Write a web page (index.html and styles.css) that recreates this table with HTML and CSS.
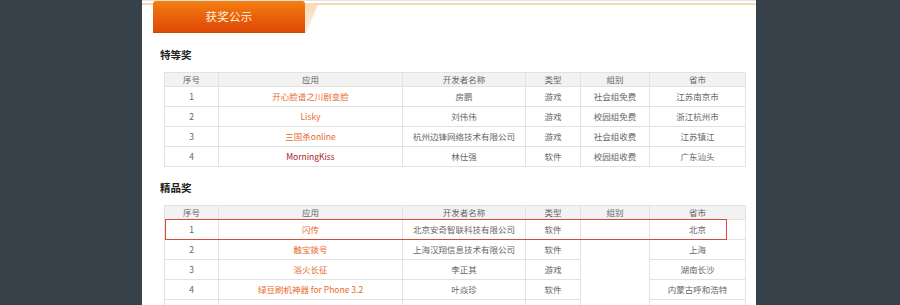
FILE: index.html
```html
<!DOCTYPE html>
<html lang="zh-CN">
<head>
<meta charset="utf-8">
<title>获奖公示</title>
<link rel="stylesheet" href="styles.css">
</head>
<body>
<div class="panel">
  <div class="tabbar">
    <div class="tab">获奖公示</div>
    <div class="wedge"></div>
  </div>

  <h2 class="sec-title">特等奖</h2>
  <div class="table-wrap">
    <table class="award">
      <colgroup>
        <col class="c1"><col class="c2"><col class="c3"><col class="c4"><col class="c5"><col class="c6">
      </colgroup>
      <thead>
        <tr><th>序号</th><th>应用</th><th>开发者名称</th><th>类型</th><th>组别</th><th>省市</th></tr>
      </thead>
      <tbody>
        <tr><td>1</td><td class="app">开心脸谱之川剧变脸</td><td>房鹏</td><td>游戏</td><td>社会组免费</td><td>江苏南京市</td></tr>
        <tr><td>2</td><td class="app">Lisky</td><td>刘伟伟</td><td>游戏</td><td>校园组免费</td><td>浙江杭州市</td></tr>
        <tr><td>3</td><td class="app">三国杀online</td><td>杭州边锋网络技术有限公司</td><td>游戏</td><td>社会组收费</td><td>江苏镇江</td></tr>
        <tr><td>4</td><td class="app dark">MorningKiss</td><td>林仕强</td><td>软件</td><td>校园组收费</td><td>广东汕头</td></tr>
      </tbody>
    </table>
  </div>

  <h2 class="sec-title">精品奖</h2>
  <div class="table-wrap">
    <table class="award">
      <colgroup>
        <col class="c1"><col class="c2"><col class="c3"><col class="c4"><col class="c5"><col class="c6">
      </colgroup>
      <thead>
        <tr><th>序号</th><th>应用</th><th>开发者名称</th><th>类型</th><th>组别</th><th>省市</th></tr>
      </thead>
      <tbody>
        <tr><td>1</td><td class="app">闪传</td><td>北京安奇智联科技有限公司</td><td>软件</td><td></td><td>北京</td></tr>
        <tr><td>2</td><td class="app">触宝拨号</td><td>上海汉翔信息技术有限公司</td><td>软件</td><td rowspan="5"></td><td>上海</td></tr>
        <tr><td>3</td><td class="app">浴火长征</td><td>李正其</td><td>游戏</td><td>湖南长沙</td></tr>
        <tr><td>4</td><td class="app">绿豆刷机神器 for Phone 3.2</td><td>叶焱珍</td><td>软件</td><td>内蒙古呼和浩特</td></tr>
        <tr><td>&nbsp;</td><td></td><td></td><td></td><td></td></tr>
        <tr><td>&nbsp;</td><td></td><td></td><td></td><td></td></tr>
      </tbody>
    </table>
    <div class="highlight"></div>
  </div>
</div>
</body>
</html>
```

FILE: styles.css
```css
html, body {
  margin: 0;
  padding: 0;
  height: 305px;
  overflow: hidden;
}

body {
  background: #36414a;
  font-family: "Noto Sans CJK SC", "Noto Sans", sans-serif;
}

.panel {
  width: 614px;
  height: 305px;
  margin-left: 142px;
  background: #ffffff;
  border-top: 1px solid #e3e3e3;
  box-sizing: border-box;
  overflow: hidden;
}

.tabbar {
  display: flex;
  align-items: flex-start;
  height: 33px;
  padding-left: 11px;
  background-image: linear-gradient(#f9dcbd, #f6d2ac);
  background-size: 100% 2px;
  background-position: 0 2px;
  background-repeat: no-repeat;
}

.tab {
  width: 152px;
  height: 32px;
  box-sizing: border-box;
  border-radius: 3px 3px 0 0;
  background: linear-gradient(#f47f10, #e5570a 70%, #df4a07);
  border-bottom: 1px solid #cf4206;
  color: #fff3df;
  font-size: 11.5px;
  line-height: 31px;
  text-align: center;
  letter-spacing: 0.3px;
}

.wedge {
  width: 13px;
  height: 29px;
  margin-top: 3px;
  background: linear-gradient(#fcd9b4, #fff1e2);
  clip-path: polygon(0 0, 100% 0, 10% 100%, 0 100%);
}

.sec-title {
  margin: 14px 0 10px 18px;
  font-size: 10.5px;
  line-height: 14px;
  font-weight: bold;
  color: #222;
}

.table-wrap {
  position: relative;
  margin-left: 22px;
  width: 581px;
}

.award {
  width: 581px;
  table-layout: fixed;
  border-collapse: collapse;
  font-size: 8.5px;
  color: #666;
}

.award .c1 { width: 54px; }
.award .c2 { width: 184px; }
.award .c3 { width: 123px; }
.award .c4 { width: 55px; }
.award .c5 { width: 69px; }
.award .c6 { width: 96px; }

.award th,
.award td {
  border: 1px solid #e2e2e2;
  padding: 0;
  text-align: center;
  white-space: nowrap;
  overflow: hidden;
}

.award th {
  height: 13px;
  line-height: 13px;
  background: #f2f2f2;
  font-weight: normal;
  color: #666;
}

.award td {
  height: 19px;
  line-height: 19px;
}

.award td.app {
  color: #e8692b;
}

.award td.app.dark {
  color: #a8232a;
}

.highlight {
  position: absolute;
  left: 1px;
  top: 14px;
  width: 562px;
  height: 21px;
  box-sizing: border-box;
  border: 1px solid #d84a3f;
}
```
